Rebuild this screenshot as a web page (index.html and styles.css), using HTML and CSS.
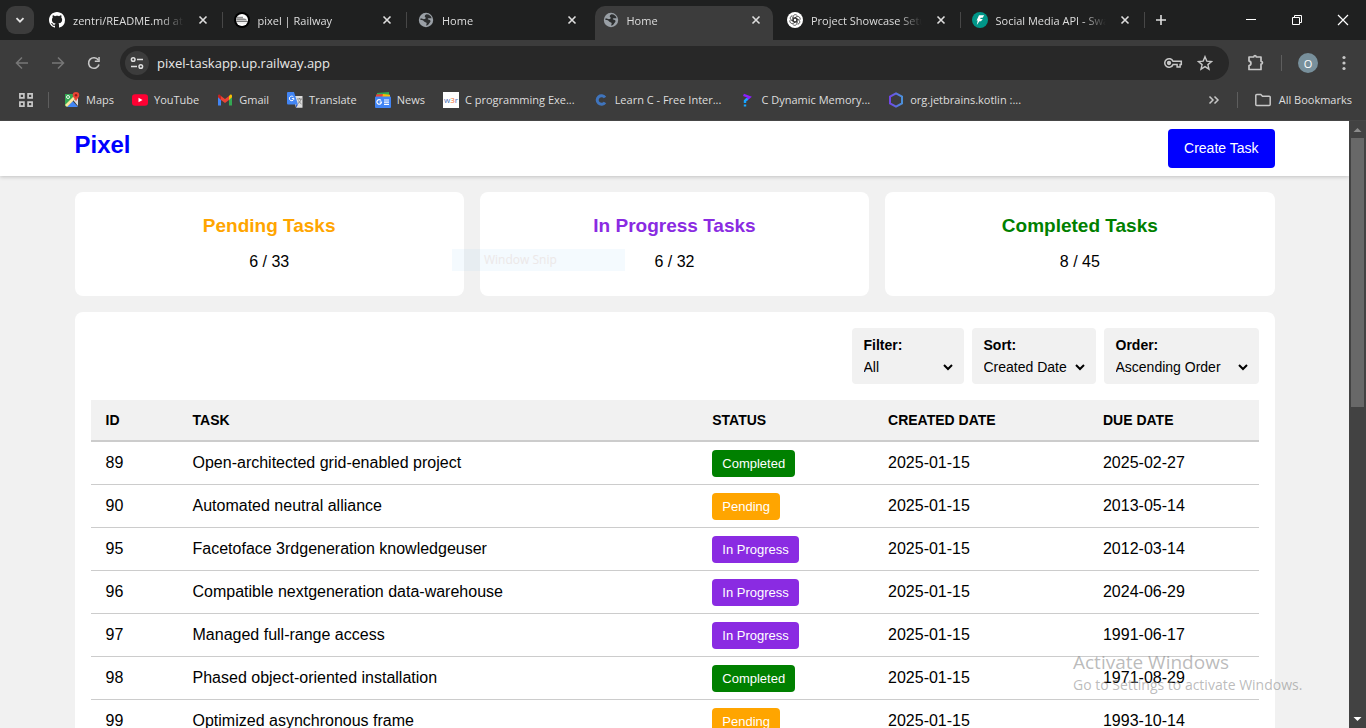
FILE: index.html
```html
<!DOCTYPE html>
<html lang="en">
<head>
<meta charset="utf-8">
<title>Home</title>
<link rel="stylesheet" href="styles.css">
</head>
<body>
<svg class="sprite" aria-hidden="true">
  <defs>
    <symbol id="close" viewBox="0 0 10 10"><path d="M1.500 1.500l7 7M8.500 1.500l-7 7" stroke="currentColor" stroke-width="1.600" fill="none"/></symbol>
    <symbol id="globe" viewBox="0 0 16 16"><circle cx="8" cy="8" r="7.200" fill="#9aa0a6"/><path d="M8.500 2.300c2.800.1 4.500 1.600 5.100 3.900H10.500c-.8 0-1 .9-.2 1.200l1.500.6c1 .5.900 1.800.1 2.400-1 .7-1 2.600-3.400 3.300-.8-.6.500-1.700.1-2.700-.3-.9-2.200-.6-2.700-1.700-.4-1-1.500-1.300-3.500-1.300 0-.7.100-1.200.3-1.700 1.600.3 2.600 1.300 4.200.8 1.200-.4 1-1.700.2-2-1-.5.200-2.500 1.400-2.800z" fill="#2d2f30"/></symbol>
  </defs>
</svg>

<header class="browser">
  <div class="tabstrip">
    <button class="tab-search" aria-label="Search tabs"><svg width="10" height="10" viewBox="0 0 10 10"><path d="M1.500 3.200L5 6.700l3.500-3.500" stroke="#e3e3e3" stroke-width="1.800" fill="none"/></svg></button>
    <nav class="tabs" aria-label="Tabs">
      <div class="tab">
        <svg class="favicon" viewBox="0 0 16 16"><path fill="#fff" d="M8 0C3.580 0 0 3.580 0 8c0 3.540 2.290 6.530 5.470 7.590.4.070.55-.17.55-.38 0-.19-.01-.82-.01-1.490-2.010.37-2.530-.49-2.690-.94-.09-.23-.48-.94-.82-1.130-.28-.15-.68-.52-.01-.53.63-.01 1.080.58 1.230.82.72 1.210 1.870.87 2.330.66.07-.52.28-.87.51-1.070-1.780-.2-3.640-.89-3.640-3.950 0-.87.31-1.590.82-2.150-.08-.2-.36-1.020.08-2.120 0 0 .67-.21 2.200.82.64-.18 1.320-.27 2-.27s1.360.09 2 .27c1.530-1.040 2.200-.82 2.200-.82.44 1.100.16 1.920.08 2.120.51.56.82 1.270.82 2.150 0 3.070-1.870 3.750-3.650 3.950.29.25.54.73.54 1.480 0 1.070-.01 1.930-.01 2.200 0 .21.15.46.55.38A8.010 8.010 0 0 0 16 8c0-4.420-3.580-8-8-8z"/></svg>
        <span class="tab-title">zentri/README.md at main</span>
        <button class="tab-close" aria-label="Close tab"><svg width="10" height="10"><use href="#close"/></svg></button>
      </div>
      <div class="tab">
        <svg class="favicon" viewBox="0 0 16 16"><circle cx="8" cy="8" r="8" fill="#000"/><circle cx="8" cy="8" r="6" fill="#fff"/><path d="M2.500 6.200h6c2.400 0 4 .7 4.600 2.300H2z" fill="#8a8a8a"/><path d="M2 9.500h12M3 5.300h6" stroke="#555" stroke-width=".8"/><path d="M3 11h10" stroke="#ccc" stroke-width=".6"/></svg>
        <span class="tab-title">pixel | Railway</span>
        <button class="tab-close" aria-label="Close tab"><svg width="10" height="10"><use href="#close"/></svg></button>
      </div>
      <div class="tab tab-before">
        <svg class="favicon"><use href="#globe"/></svg>
        <span class="tab-title">Home</span>
        <button class="tab-close" aria-label="Close tab"><svg width="10" height="10"><use href="#close"/></svg></button>
      </div>
      <div class="tab tab-active">
        <svg class="favicon"><use href="#globe"/></svg>
        <span class="tab-title">Home</span>
        <button class="tab-close" aria-label="Close tab"><svg width="10" height="10"><use href="#close"/></svg></button>
      </div>
      <div class="tab">
        <svg class="favicon" viewBox="0 0 16 16"><circle cx="8" cy="8" r="8" fill="#fff"/><g fill="none" stroke="#333" stroke-width=".8"><path id="petal" d="M8 6L9.900 7.100v3.900c0 2.400-3 3.200-4.200 1.300M9.900 9.200L6.500 11.200"/><use href="#petal" transform="rotate(60 8 8)"/><use href="#petal" transform="rotate(120 8 8)"/><use href="#petal" transform="rotate(180 8 8)"/><use href="#petal" transform="rotate(240 8 8)"/><use href="#petal" transform="rotate(300 8 8)"/></g></svg>
        <span class="tab-title">Project Showcase Setup</span>
        <button class="tab-close" aria-label="Close tab"><svg width="10" height="10"><use href="#close"/></svg></button>
      </div>
      <div class="tab">
        <svg class="favicon" viewBox="0 0 16 16"><circle cx="8" cy="8" r="8" fill="#009688"/><path d="M7 3.200h5.200l-1.600 2.500H8.700L8.200 7h2.600L9 9.300H7.400L4.800 13l.9-4.500H4.600z" fill="#fff"/></svg>
        <span class="tab-title">Social Media API - Swagger</span>
        <button class="tab-close" aria-label="Close tab"><svg width="10" height="10"><use href="#close"/></svg></button>
      </div>
    </nav>
    <button class="new-tab" aria-label="New tab"><svg width="12" height="12" viewBox="0 0 12 12"><path d="M6 1v10M1 6h10" stroke="#dedede" stroke-width="1.600"/></svg></button>
    <div class="window-controls">
      <button aria-label="Minimize"><svg width="12" height="12" viewBox="0 0 12 12"><path d="M1 5.500h10" stroke="#fff"/></svg></button>
      <button aria-label="Restore"><svg width="12" height="12" viewBox="0 0 12 12"><path d="M1.500 3.500h7v7h-7zM3.500 3.500v-2h7v7h-2" stroke="#fff" fill="none"/></svg></button>
      <button aria-label="Close"><svg width="12" height="12" viewBox="0 0 12 12"><path d="M1 1l10 10M11 1L1 11" stroke="#fff" stroke-width="1.200"/></svg></button>
    </div>
  </div>

  <div class="toolbar">
    <div class="nav-buttons">
      <button aria-label="Back"><svg width="16" height="16" viewBox="0 0 16 16"><path d="M14 8H2.800M8 2.500L2.500 8 8 13.500" stroke="#777" stroke-width="1.500" fill="none"/></svg></button>
      <button aria-label="Forward"><svg width="16" height="16" viewBox="0 0 16 16"><path d="M2 8h11.200M8 2.500L13.500 8 8 13.500" stroke="#777" stroke-width="1.500" fill="none"/></svg></button>
      <button aria-label="Reload"><svg width="16" height="16" viewBox="0 0 16 16"><path d="M13 9.500A5.300 5.300 0 1 1 12.300 5" stroke="#c7c7c7" stroke-width="1.600" fill="none"/><path d="M13.800 2v5H8.800V5.500h3.500V2z" fill="#c7c7c7"/></svg></button>
    </div>
    <div class="omnibox">
      <button class="site-info" aria-label="Site information"><svg width="14" height="14" viewBox="0 0 14 14" fill="none" stroke="#dedede" stroke-width="1.500"><circle cx="3.200" cy="3.500" r="1.800"/><path d="M7 3.500h6M1 10.500h6"/><circle cx="10.800" cy="10.500" r="1.800"/></svg></button>
      <input class="address" aria-label="Address" value="pixel-taskapp.up.railway.app">
      <button aria-label="Passwords"><svg width="20" height="14" viewBox="0 0 20 14" fill="none" stroke="#c7c7c7" stroke-width="1.500"><path d="M10 5.300h8.300v3.300h-1.200V11h-3V8.600H10A4.300 4.300 0 1 1 10 5.300z"/><circle cx="6" cy="7" r="1.400" fill="#c7c7c7"/></svg></button>
      <button aria-label="Bookmark this page"><svg width="16" height="16" viewBox="0 0 16 16"><path d="M8 1.700l1.800 4.400 4.700.4-3.600 3.100 1.100 4.600L8 11.700l-4 2.500 1.100-4.600-3.600-3.100 4.700-.4z" stroke="#c7c7c7" stroke-width="1.400" fill="none"/></svg></button>
    </div>
    <button class="extensions" aria-label="Extensions"><svg width="18" height="18" viewBox="0 0 18 18"><path d="M2 3h4.800c.2-2 2.200-2 2.400 0H14v4.300c2 .2 2 2.600 0 2.800v5.400H2v-4c2.600-.2 2.600-4.200 0-4.400z" stroke="#c7c7c7" stroke-width="1.700" fill="none" stroke-linejoin="round"/></svg></button>
    <span class="divider"></span>
    <button class="avatar">O</button>
    <button class="more" aria-label="Menu"><svg width="4" height="16" viewBox="0 0 4 16" fill="#c7c7c7"><circle cx="2" cy="2.500" r="1.600"/><circle cx="2" cy="8" r="1.600"/><circle cx="2" cy="13.500" r="1.600"/></svg></button>
  </div>

  <nav class="bookmarks" aria-label="Bookmarks">
    <button class="apps" aria-label="Apps"><svg width="14" height="14" viewBox="0 0 14 14" fill="none" stroke="#c7c7c7" stroke-width="1.700"><path d="M.9.9h4v4h-4zM9.100.9h4v4h-4zM.9 9.100h4v4h-4zM9.100 9.100h4v4h-4z"/></svg></button>
    <span class="divider"></span>
    <div class="bookmark-list">
      <a href="#"><svg width="16" height="16" viewBox="0 0 16 16"><path d="M1 2h11l-9 12.500H2a1 1 0 0 1-1-1z" fill="#34a853"/><path d="M14 5v9L9.500 8.500z" fill="#ddd"/><path d="M3 15l5.500-6 5.500 6z" fill="#4285f4"/><path d="M1 13L11 3l2 2L3 15z" fill="#fbe9a0"/><circle cx="4" cy="5" r="1.500" fill="none" stroke="#fff" stroke-width=".9"/><path d="M12 0a3.300 3.300 0 0 0-3.300 3.300C8.700 5.500 11 6.500 12 9.500c1-3 3.300-4 3.300-6.200A3.300 3.300 0 0 0 12 0z" fill="#ea4335"/><circle cx="12" cy="3.300" r="1.200" fill="#8c1d18"/></svg>Maps</a>
      <a href="#"><svg width="16" height="16" viewBox="0 0 16 16"><rect y="2.300" width="16" height="11.400" rx="3" fill="#f03"/><path d="M6.500 5.700l4 2.300-4 2.300z" fill="#fff"/></svg>YouTube</a>
      <a href="#"><svg width="16" height="16" viewBox="0 0 16 16"><path d="M1 4v9.500h3V7z" fill="#4285f4"/><path d="M15 4v9.500h-3V7z" fill="#34a853"/><path d="M12 4l1.200-1.200C14 2.200 15 2.800 15 4v1.300L12 8z" fill="#fbbc04"/><path d="M4 8V4l4 3 4-3v4l-4 3z" fill="#ea4335"/><path d="M1 4c0-1.200 1-1.800 1.800-1.200L4 4v4L1 5.300z" fill="#c5221f"/></svg>Gmail</a>
      <a href="#"><svg width="16" height="16" viewBox="0 0 16 16"><path d="M6 4h9.500v11.800H9z" fill="#ddd"/><path d="M1 0h6l4 12.500H1a1 1 0 0 1-1-1V1a1 1 0 0 1 1-1z" fill="#4285f4"/><path d="M9 12.500h2L9 16z" fill="#2a56c6"/><path d="M6.500 5A2.300 2.300 0 1 0 7 6.600H4.800" stroke="#fff" fill="none"/><path d="M10 7h5M12.500 6v1M14 7c-.4 2-1.500 3.500-3 4.500M11.500 8.500c.7 1.600 1.700 2.700 3 3.500" stroke="#777" stroke-width=".8" fill="none"/></svg>Translate</a>
      <a href="#"><svg width="16" height="16" viewBox="0 0 16 16"><path d="M2 1l12-1v6H2z" fill="#34a853"/><path d="M1 2.500L8 2v4H1z" fill="#ea4335"/><path d="M8 2l7 .7V7H7z" fill="#fbbc04"/><rect y="4.500" width="16" height="11.500" rx="1" fill="#4285f4"/><path d="M6 8.500A2.300 2.300 0 1 0 6.500 10H4.500M9 8h5M9 10.200h5M9 12.400h5" stroke="#fff" stroke-width="1.200" fill="none"/></svg>News</a>
      <a href="#"><span class="w3r">w<b>3</b>r</span>C programming Exe...</a>
      <a href="#"><svg width="16" height="16" viewBox="0 0 16 16"><path d="M12 5.500A4.300 4.300 0 1 0 12 10.500" fill="none" stroke="#3f74bd" stroke-width="3"/></svg>Learn C - Free Inter...</a>
      <a href="#"><svg width="16" height="16" viewBox="0 0 16 16"><path d="M4.500 2.800l6 2.400L7 8" stroke="#8a1fff" stroke-width="2.400" fill="none"/><path d="M8.500 6.800L6 8.800V11M6 12.500v2" stroke="#16a5ff" stroke-width="2.400" fill="none"/></svg>C Dynamic Memory...</a>
      <a href="#"><svg width="16" height="16" viewBox="0 0 16 16"><defs><linearGradient id="hex"><stop offset="0" stop-color="#7146e8"/><stop offset="1" stop-color="#4a90d9"/></linearGradient></defs><path d="M8 1.300l6 3.400v6.600l-6 3.400-6-3.400V4.700z" fill="none" stroke="url(#hex)" stroke-width="2"/></svg>org.jetbrains.kotlin :...</a>
    </div>
    <button class="overflow" aria-label="More bookmarks"><svg width="12" height="10" viewBox="0 0 12 10"><path d="M1.500 1.500L5 5 1.500 8.500M6.500 1.500L10 5 6.500 8.500" stroke="#c7c7c7" stroke-width="1.500" fill="none"/></svg></button>
    <span class="divider"></span>
    <a class="all-bookmarks" href="#"><svg width="16" height="14" viewBox="0 0 16 14"><path d="M.8 2.500a1 1 0 0 1 1-1h4L7.500 3.200h6.700a1 1 0 0 1 1 1v7.300a1 1 0 0 1-1 1H1.800a1 1 0 0 1-1-1z" stroke="#c7c7c7" stroke-width="1.500" fill="none"/></svg>All Bookmarks</a>
  </nav>
</header>

<div class="viewport">
  <div class="page">
    <header class="site-header">
      <div class="container header-row">
        <h1 class="brand">Pixel</h1>
        <button class="create">Create Task</button>
      </div>
    </header>
    <main class="container main">
      <section class="stats">
        <article class="stat"><h2 class="pending-text">Pending Tasks</h2><p>6 / 33</p></article>
        <article class="stat"><h2 class="progress-text">In Progress Tasks</h2><p>6 / 32</p></article>
        <article class="stat"><h2 class="completed-text">Completed Tasks</h2><p>8 / 45</p></article>
      </section>
      <section class="panel">
        <form class="filters">
          <div class="field field-small"><label for="filter">Filter:</label><select id="filter"><option>All</option></select></div>
          <div class="field field-medium"><label for="sort">Sort:</label><select id="sort"><option>Created Date</option></select></div>
          <div class="field field-large"><label for="order">Order:</label><select id="order"><option>Ascending Order</option></select></div>
        </form>
        <table class="tasks">
          <colgroup><col class="col-id"><col class="col-task"><col class="col-status"><col class="col-created"><col class="col-due"></colgroup>
          <thead><tr><th>ID</th><th>TASK</th><th>STATUS</th><th>CREATED DATE</th><th>DUE DATE</th></tr></thead>
          <tbody>
            <tr><td>89</td><td>Open-architected grid-enabled project</td><td><span class="badge completed">Completed</span></td><td>2025-01-15</td><td>2025-02-27</td></tr>
            <tr><td>90</td><td>Automated neutral alliance</td><td><span class="badge pending">Pending</span></td><td>2025-01-15</td><td>2013-05-14</td></tr>
            <tr><td>95</td><td>Facetoface 3rdgeneration knowledgeuser</td><td><span class="badge progress">In Progress</span></td><td>2025-01-15</td><td>2012-03-14</td></tr>
            <tr><td>96</td><td>Compatible nextgeneration data-warehouse</td><td><span class="badge progress">In Progress</span></td><td>2025-01-15</td><td>2024-06-29</td></tr>
            <tr><td>97</td><td>Managed full-range access</td><td><span class="badge progress">In Progress</span></td><td>2025-01-15</td><td>1991-06-17</td></tr>
            <tr><td>98</td><td>Phased object-oriented installation</td><td><span class="badge completed">Completed</span></td><td>2025-01-15</td><td>1971-08-29</td></tr>
            <tr><td>99</td><td>Optimized asynchronous frame</td><td><span class="badge pending">Pending</span></td><td>2025-01-15</td><td>1993-10-14</td></tr>
          </tbody>
        </table>
      </section>
    </main>
  </div>
  <div class="scrollbar" aria-hidden="true">
    <svg class="arrow" viewBox="0 0 17 17"><path d="M4.500 11L8.500 7l4 4z" fill="#8b8b8b"/></svg>
    <div class="track"><div class="thumb"></div></div>
    <svg class="arrow" viewBox="0 0 17 17"><path d="M4.500 6L8.500 10l4-4z" fill="#fff"/></svg>
  </div>
</div>

<div class="snip">Window Snip</div>
<div class="watermark"><div class="watermark-title">Activate Windows</div><div>Go to Settings to activate Windows.</div></div>
</body>
</html>
```

FILE: styles.css
```css
* { box-sizing: border-box; }

body {
  margin: 0;
  height: 100vh;
  display: flex;
  flex-direction: column;
  overflow: hidden;
  font-family: "Liberation Sans", Arial, sans-serif;
  font-size: 16px;
  color: #000;
}

button { border: 0; padding: 0; background: none; font-family: inherit; }
svg { display: block; flex: none; }
.sprite { position: absolute; width: 0; height: 0; }

/* Browser chrome */
.browser {
  flex: none;
  background: #3c3c3c;
  border-bottom: 1px solid #464646;
  color: #dedede;
  font-family: "Open Sans", "Noto Sans", sans-serif;
  font-size: 12px;
}

.browser button { display: flex; align-items: center; justify-content: center; color: inherit; flex: none; }

.tabstrip { display: flex; align-items: center; height: 40px; padding-left: 6px; background: #1f2020; }
.tab-search { width: 28px; height: 28px; border-radius: 9px; background: #3c3c3c; }

.tabs { display: grid; grid-template-columns: repeat(6, minmax(0, 1fr)); flex: 0 1 1107px; align-self: stretch; margin-left: 4px; }
.tab { position: relative; display: flex; align-items: center; padding: 0 15px 0 11px; min-width: 0; }
.tab::after { content: ""; position: absolute; right: 0; top: 12px; width: 1px; height: 16px; background: #474747; }
.tab-before::after, .tab-active::after { display: none; }
.favicon { width: 16px; height: 16px; margin-right: 8px; }
.tab-title {
  flex: 1;
  min-width: 0;
  overflow: hidden;
  white-space: nowrap;
  font-size: 11px;
  mask-image: linear-gradient(to right, #000 calc(100% - 24px), transparent);
}
.tab-close { width: 10px; height: 10px; margin-left: 14px; }

.tab-active { z-index: 1; }
.tab-active > * { z-index: 1; }
.tab-active::before {
  content: "";
  position: absolute;
  inset: 6px 3px 0 3px;
  border-radius: 10px 10px 0 0;
  background: #3c3c3c;
}

.new-tab { width: 32px; height: 32px; }
.window-controls { display: flex; align-self: stretch; margin-left: auto; }
.window-controls button { width: 46px; }

.toolbar { display: flex; align-items: center; height: 46px; padding-right: 20px; }
.nav-buttons { display: flex; gap: 20px; padding: 0 18px 0 14px; }
.omnibox { flex: 1; display: flex; align-items: center; gap: 14px; height: 34px; padding: 0 16px 0 5px; border-radius: 17px; background: #282828; }
.omnibox .site-info { width: 24px; height: 24px; border-radius: 50%; background: #3c3c3c; }
.address { flex: 1; min-width: 0; margin-left: -6px; padding: 0; border: 0; background: none; color: #e8e8e8; font-family: inherit; font-size: 13px; }
.extensions { margin-left: 18px; }
.divider { flex: none; width: 1px; height: 16px; background: #5e5e5e; }
.toolbar .divider { margin: 0 16px; }
.browser .avatar { width: 20px; height: 20px; border-radius: 50%; background: #78909c; color: #fff; font-size: 11px; }
.browser .more { margin-left: 24px; }

.bookmarks { display: flex; align-items: center; height: 34px; padding: 0 14px 7px 19px; font-size: 11px; }
.bookmarks a { display: flex; align-items: center; gap: 6px; color: inherit; text-decoration: none; white-space: nowrap; }
.apps { margin-right: 15px; }
.bookmark-list { display: flex; gap: 18px; flex: 1; min-width: 0; overflow: hidden; margin-left: 15px; }
.w3r { width: 16px; height: 16px; background: #fff; color: #4a6fb5; font-size: 8px; line-height: 15px; text-align: center; }
.w3r b { color: #f07030; font-weight: 400; }
.bookmarks .overflow { margin-right: 17px; }
.bookmarks .all-bookmarks { margin-left: 17px; gap: 8px; }

/* Page */
.viewport { flex: 1; min-height: 0; display: flex; }
.page { flex: 1; min-width: 0; overflow: hidden; background: #f1f1f1; }
.container { width: 100%; max-width: 1200px; margin: 0 auto; }

.site-header { background: #fff; box-shadow: 0 1px 4px rgba(0, 0, 0, 0.2); }
.header-row { display: flex; align-items: flex-start; justify-content: space-between; padding: 8px 0; }
.brand { margin: 0; font-size: 24px; line-height: 32px; color: #00f; }
.create { padding: 12px 16px; border-radius: 4px; background: #00f; color: #fff; font-size: 14px; line-height: 15px; }

.main { display: grid; gap: 16px; padding: 16px 0; }
.stats { display: grid; grid-template-columns: repeat(3, 1fr); gap: 16px; }
.stat { padding: 16px; border-radius: 8px; background: #fff; text-align: center; line-height: 36px; }
.stat h2 { margin: 0; font-size: 19px; }
.stat p { margin: 0; }
.pending-text { color: orange; }
.progress-text { color: blueviolet; }
.completed-text { color: green; }

.panel { padding: 16px; border-radius: 8px; background: #fff; }
.filters { display: flex; justify-content: flex-end; gap: 8px; margin-bottom: 16px; }
.field { display: grid; gap: 2px; padding: 8px 8px 6px; border-radius: 4px; background: #f1f1f1; font-size: 14px; }
.field label { padding-left: 4px; font-weight: 700; line-height: 18px; }
.field select { width: 100%; height: 22px; padding: 0; border: 0; background: transparent; color: #000; font: inherit; }
.field-small { width: 112px; }
.field-medium { width: 124px; }
.field-large { width: 155px; }

.tasks { width: 100%; table-layout: fixed; border-collapse: separate; border-spacing: 0; text-align: left; }
.col-id { width: 7.450%; }
.col-task { width: 44.500%; }
.col-status { width: 15.050%; }
.col-created { width: 18.400%; }
.col-due { width: 14.600%; }
.tasks th { height: 42px; padding: 0 15px; border-bottom: 2px solid #ccc; background: #f1f1f1; font-size: 14px; }
.tasks td { height: 43px; padding: 0 15px; border-bottom: 1px solid #ccc; }
.badge { display: block; width: fit-content; padding: 6px 10px; border-radius: 4px; color: #fff; font-size: 13px; line-height: 15px; }
.completed { background: green; }
.pending { background: orange; }
.progress { background: blueviolet; }

.scrollbar { flex: none; width: 17px; display: flex; flex-direction: column; background: #424242; }
.arrow { width: 17px; height: 17px; }
.track { flex: 1; padding: 0 2px; }
.thumb { height: 47%; background: #686868; }

/* Desktop overlays */
.snip {
  position: absolute;
  left: 452px;
  top: 249px;
  width: 173px;
  padding-left: 32px;
  background: rgba(120, 190, 240, 0.08);
  color: #ece8e8;
  font: 12px/22px "Open Sans", sans-serif;
}
.watermark {
  position: absolute;
  left: 1073px;
  top: 650px;
  color: rgba(130, 130, 130, 0.55);
  font: 14px/22px "Open Sans", sans-serif;
  white-space: nowrap;
}
.watermark-title { font-size: 19px; line-height: 24px; }
```
